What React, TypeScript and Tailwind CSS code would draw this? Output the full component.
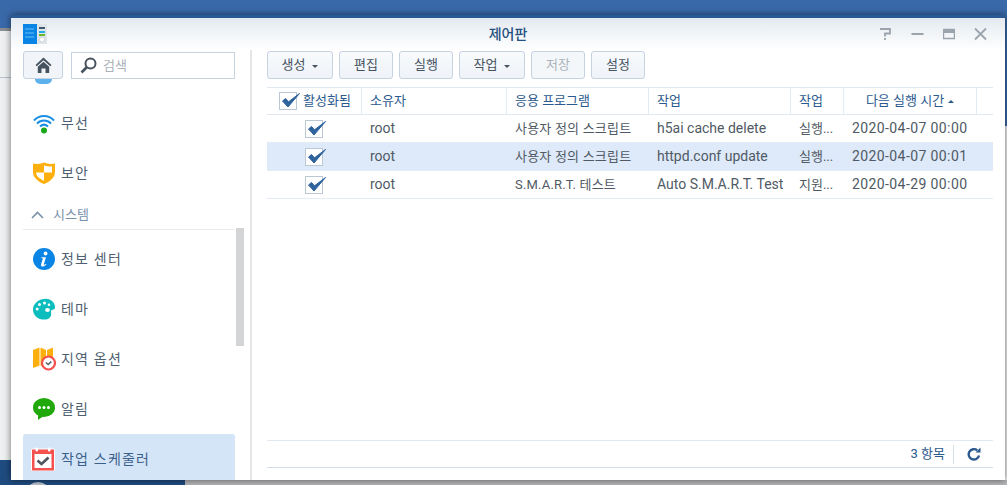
import React from "react";

const font = { fontFamily: '"Roboto", "Noto Sans CJK KR", sans-serif' };

// 사이드바 아이콘
const WifiIcon = () => (
  <svg width="22" height="22" viewBox="0 0 22 22" fill="none">
    <path d="M1 8.5C6.5 2.5 15.5 2.5 21 8.5" stroke="#1a8fe3" strokeWidth="2" />
    <path d="M4 11.5C8 7.5 14 7.5 18 11.5" stroke="#1a8fe3" strokeWidth="2" />
    <path d="M7 14.5C9.5 12.2 12.5 12.2 15 14.5" stroke="#1a8fe3" strokeWidth="2" />
    <circle cx="11" cy="18.5" r="3" fill="#19a81c" />
  </svg>
);

const ShieldIcon = () => (
  <svg width="22" height="22" viewBox="0 0 22 22">
    <path d="M11 0.5C14 2 18 2.2 22 1.5V10C22 16 16 20 11 22C6 20 0 16 0 10V1.5C4 2.2 8 2 11 0.5Z" fill="#fdb00d" />
    <path d="M11 3.5C13.5 4.5 16.5 4.8 19 4.4V10.5H11ZM11 10.5V18.8C7.5 17.2 3.2 14.4 3 10.5Z" fill="#fff" />
  </svg>
);

const InfoIcon = () => (
  <svg width="22" height="22" viewBox="0 0 22 22">
    <circle cx="11" cy="11" r="11" fill="#0a85e6" />
    <circle cx="12.6" cy="5.5" r="1.9" fill="#fff" />
    <path d="M8.5 9.2H13L10.8 16.2C10.6 17 11.4 17 13 15.8L13.3 16.4C11.5 18.2 10 18.8 8.8 18.4C7.8 18 7.9 17 8.2 16L9.9 10.6L8.3 10.1Z" fill="#fff" />
  </svg>
);

const PaletteIcon = () => (
  <svg width="22" height="22" viewBox="0 0 22 22">
    <path d="M11 1C17 0 22 4 22 9.5C22 11 21 11.5 19 12C17 12.6 18.8 15 18 17.5C17 21 13 22 9 21.5C3.5 20.5 0 16.5 0 11.5C0 6 5 1.500 11 1Z" fill="#0cbdbd" />
    <circle cx="11.5" cy="5" r="1.5" fill="#fff" />
    <circle cx="6.500" cy="6.500" r="1.500" fill="#fff" />
    <circle cx="4.200" cy="11" r="1.500" fill="#fff" />
    <circle cx="16" cy="6.800" r="1.300" fill="#fff" />
    <ellipse cx="14.500" cy="12" rx="2.400" ry="2.100" fill="#fff" />
  </svg>
);

const RegionIcon = () => (
  <svg width="23" height="24" viewBox="0 0 23 24">
    <path d="M0 3L6.500 0.500V18.500L0 21Z" fill="#fdb00d" />
    <path d="M7.500 0.500L13 3V21L7.500 18.500Z" fill="#fdb00d" />
    <path d="M14 3L20 0.500V12H14Z" fill="#fdb00d" />
    <circle cx="15.500" cy="16" r="6.500" fill="#fff" stroke="#f4514f" strokeWidth="2.200" />
    <path d="M12.800 15.500L15.200 17.500L18.300 14.600" fill="none" stroke="#56606a" strokeWidth="1.500" />
  </svg>
);

const ChatIcon = () => (
  <svg width="22" height="22" viewBox="0 0 22 22">
    <ellipse cx="11" cy="9.500" rx="11" ry="9.500" fill="#21a80b" />
    <path d="M5 15L5 22L12 17Z" fill="#21a80b" />
    <circle cx="6.500" cy="9.500" r="1.500" fill="#fff" />
    <circle cx="11" cy="9.500" r="1.500" fill="#fff" />
    <circle cx="15.500" cy="9.500" r="1.500" fill="#fff" />
  </svg>
);

const CalendarIcon = () => (
  <svg width="24" height="24" viewBox="0 0 24 24">
    <rect x="0.500" y="2" width="23" height="22" rx="1" fill="#f4514f" stroke="#fff" strokeWidth="1" />
    <rect x="3.500" y="7" width="17" height="14" fill="#fff" />
    <rect x="4.500" y="0.500" width="2.500" height="4" rx="1" fill="#fff" />
    <rect x="17" y="0.500" width="2.500" height="4" rx="1" fill="#fff" />
    <path d="M6.500 13.500L10.500 17L17.500 10.500" fill="none" stroke="#4e5560" strokeWidth="2.600" />
  </svg>
);

const Check = () => (
  <span className="relative block w-[18px] h-[18px] border border-[#bcc7d4] bg-white">
    <svg className="absolute left-[1px] -top-[3px]" width="20" height="20" viewBox="0 0 20 20">
      <path d="M1.500 11L7 17L18.500 3.500L7.500 11.800L4.500 8.500Z" fill="#2f639e" stroke="#2f639e" strokeWidth="1" />
    </svg>
  </span>
);

const Caret = () => (
  <span className="ml-[7px] mt-[2px] w-0 h-0 border-l-[3px] border-r-[3px] border-t-[3px] border-l-transparent border-r-transparent border-t-[#46525e]" />
);

const navItems = [
  { label: "정보 센터", icon: <InfoIcon /> },
  { label: "테마", icon: <PaletteIcon /> },
  { label: "지역 옵션", icon: <RegionIcon /> },
  { label: "알림", icon: <ChatIcon /> },
];

const NavRow = ({ label, icon }: { label: string; icon: React.ReactNode }) => (
  <div className="flex items-center h-[50px] pl-[9px] text-[14px] tracking-[1.2px] text-[#505f70]">
    <span className="w-[24px] h-[24px] flex items-center justify-center">{icon}</span>
    <span className="ml-[5px]">{label}</span>
  </div>
);

const buttons = [
  { label: "생성", w: "w-[66px]", caret: true },
  { label: "편집", w: "w-[54px]" },
  { label: "실행", w: "w-[54px]" },
  { label: "작업", w: "w-[66px]", caret: true },
  { label: "저장", w: "w-[54px]", disabled: true },
  { label: "설정", w: "w-[54px]" },
];

const rows = [
  { app: "사용자 정의 스크립트", task: "h5ai cache delete", action: "실행...", next: "2020-04-07 00:00" },
  { app: "사용자 정의 스크립트", task: "httpd.conf update", action: "실행...", next: "2020-04-07 00:01", selected: true },
  { app: "S.M.A.R.T. 테스트", task: "Auto S.M.A.R.T. Test", action: "지원...", next: "2020-04-29 00:00" },
];

export default function App() {
  return (
    <div className="relative w-[1007px] h-[485px] overflow-hidden bg-[#eef0f2] text-[13px]" style={font}>
      {/* 바탕화면 */}
      <div className="absolute left-0 top-0 w-full h-[28px] bg-[#3a69a9]" />
      <div className="absolute right-0 top-0 w-[2px] h-[126px] bg-[#3a69a9]" />
      <div className="absolute left-0 top-[28px] w-[11px] h-[3px] bg-[#8b8f94]" />
      <div className="absolute left-0 top-[77px] w-[11px] h-px bg-[#b9c2cc]" />
      <div className="absolute left-0 top-[460px] w-[185px] h-[25px] bg-[#1f4c80]" />
      <div className="absolute left-[185px] top-[480px] w-[822px] h-[5px] bg-[#b5b6b8]" />
      <div className="absolute left-[25px] top-[482px] w-[26px] h-[26px] rounded-full bg-[#b9c2cc]" />

      {/* 제어판 창 */}
      <div className="absolute left-[11px] top-[15px] w-[994px] h-[465px] flex flex-col bg-white border-t-[3px] border-[#2a5a94] shadow-[0_0_7px_rgba(0,0,0,0.55)]">
        <div className="relative h-[32px] shrink-0 flex items-center justify-center bg-gradient-to-b from-[#e4eaf0] to-white">
          <svg className="absolute left-[12px] top-[6px]" width="24" height="20" viewBox="0 0 24 20">
            <rect width="14" height="20" fill="#0a85e6" />
            <rect x="14" width="10" height="20" fill="#dfe4e8" />
            <path d="M2 5H11M2 9H11M2 13H11" stroke="#6cc0f5" strokeWidth="1" />
            <rect x="16" y="3" width="6" height="2" fill="#3d5a70" />
            <rect x="16" y="7" width="6" height="2" fill="#1fb0e8" />
            <rect x="16" y="10" width="6" height="2" fill="#6ab82c" />
            <circle cx="19" cy="15.500" r="2.500" fill="#fff" stroke="#a9b4bd" strokeWidth="0.500" />
          </svg>
          <span className="text-[14px] text-[#24507f] font-medium">제어판</span>
          <div className="absolute left-[867px] top-[9px] flex items-center text-[#9ba4ad]">
            <svg width="14" height="14" viewBox="0 0 14 14" fill="none" stroke="currentColor" strokeWidth="1.800">
              <path d="M2 2H12V6.500H7V9.500" />
              <path d="M7 11V13" />
            </svg>
            <svg className="ml-[19px]" width="13" height="14" viewBox="0 0 13 14" fill="none" stroke="currentColor" strokeWidth="2">
              <path d="M0.500 7H12.500" />
            </svg>
            <svg className="ml-[19px]" width="12" height="14" viewBox="0 0 12 14" fill="none" stroke="currentColor">
              <path d="M0.500 2.500H11.500V11.500H0.500Z" strokeWidth="1.400" />
              <path d="M0.500 4.500H11.500" strokeWidth="3" />
            </svg>
            <svg className="ml-[19px]" width="13" height="14" viewBox="0 0 13 14" fill="none" stroke="currentColor" strokeWidth="1.800">
              <path d="M1 1.500L12 12.500M12 1.500L1 12.500" />
            </svg>
          </div>
        </div>

        <div className="flex flex-1 min-h-0">
          {/* 사이드바 */}
          <aside className="relative w-[241px] shrink-0 border-r-2 border-[#e4e6e8]">
            <div className="relative z-10 flex gap-[8px] pl-[12px] pt-[1px] bg-white h-[29px]">
              <div className="w-[40px] h-[28px] flex items-center justify-center rounded-[3px] border border-[#c5d2e0] bg-[#f1f5f9]">
                <svg width="17" height="16" viewBox="0 0 17 16">
                  <path d="M8.500 0.500L0.500 8L1.800 9.300L8.500 3.200L15.200 9.300L16.500 8Z" fill="#46525e" />
                  <path d="M2.800 9.800L8.500 4.700L14.200 9.800V16H10.500V11.500H6.500V16H2.800Z" fill="#46525e" />
                </svg>
              </div>
              <div className="flex items-center w-[164px] h-[27px] mt-px border border-[#c5d2e0] pl-[8px] text-[13px] text-[#aab2ba]">
                <svg width="17" height="17" viewBox="0 0 17 17" fill="none">
                  <circle cx="10.500" cy="6.500" r="5" stroke="#46525e" strokeWidth="2" />
                  <path d="M7 10L1.500 15.500" stroke="#46525e" strokeWidth="2.600" />
                </svg>
                <span className="ml-[6px]">검색</span>
              </div>
            </div>

            <div className="relative h-[401px] overflow-hidden pl-[12px] w-[235px]">
              <div className="absolute left-[24px] top-0 w-[17px] h-[5px] rounded-b-full bg-[#5db2ee]" />
              <div className="w-[212px] pt-[19px]">
                <NavRow label="무선" icon={<WifiIcon />} />
                <NavRow label="보안" icon={<ShieldIcon />} />
                <div className="flex items-center h-[31px] mt-[1px] pt-[2px] pl-[8px] border-b border-[#e8eaec] text-[13px] text-[#7b92ab]">
                  <svg width="13" height="8" viewBox="0 0 13 8" fill="none" stroke="#7b92ab" strokeWidth="1.600">
                    <path d="M1 7L6.500 1.500L12 7" />
                  </svg>
                  <span className="ml-[9px]">시스템</span>
                </div>
                <div className="pt-[4px]">
                  {navItems.map((item) => (
                    <NavRow key={item.label} label={item.label} icon={item.icon} />
                  ))}
                </div>
                <div className="flex items-center h-[50px] pl-[8px] rounded-[3px] bg-[#d5e5f8] text-[14px] tracking-[1.2px] text-[#3a5f8a]">
                  <CalendarIcon />
                  <span className="ml-[6px]">작업 스케줄러</span>
                </div>
              </div>
              <div className="absolute left-[225px] top-[149px] w-[8px] h-[118px] bg-[#d3d4d6]" />
            </div>
          </aside>

          {/* 작업 스케줄러 목록 */}
          <main className="flex-1 min-w-0 flex flex-col pl-[15px] pr-[12px] pt-[1px]">
            <div className="flex gap-[6px] h-[28px] shrink-0">
              {buttons.map((b) => (
                <button
                  key={b.label}
                  className={`${b.w} h-[28px] flex items-center justify-center rounded-[3px] border border-[#c5d2e0] text-[13px] ${
                    b.disabled ? "bg-[#f4f7fa] text-[#a9b2bb]" : "bg-gradient-to-b from-[#f8fafc] to-[#eef3f8] text-[#46525e]"
                  }`}
                >
                  {b.label}
                  {b.caret && <Caret />}
                </button>
              ))}
            </div>

            <div className="mt-[8px] flex h-[28px] shrink-0 items-center border-y border-[#dfe7f0] text-[13px] text-[#2c5a8e]">
              <div className="w-[95px] h-full flex items-center border-r border-[#e3ebf4] pl-[12px] whitespace-nowrap">
                <Check />
                <span className="ml-[6px]">활성화됨</span>
              </div>
              <div className="w-[145px] h-full flex items-center border-r border-[#e3ebf4] pl-[8px]">소유자</div>
              <div className="w-[142px] h-full flex items-center border-r border-[#e3ebf4] pl-[8px]">응용 프로그램</div>
              <div className="w-[142px] h-full flex items-center border-r border-[#e3ebf4] pl-[8px]">작업</div>
              <div className="w-[53px] h-full flex items-center border-r border-[#e3ebf4] pl-[8px]">작업</div>
              <div className="w-[133px] h-full flex items-center justify-center border-r border-[#e3ebf4] whitespace-nowrap">
                다음 실행 시간
                <span className="ml-[4px] w-0 h-0 border-l-[3px] border-r-[3px] border-b-[3px] border-l-transparent border-r-transparent border-b-[#2c5a8e]" />
              </div>
            </div>

            {rows.map((row) => (
              <div
                key={row.task}
                className={`flex items-center h-[28px] shrink-0 border-b border-[#e3ebf4] text-[14px] text-[#505a64] ${
                  row.selected ? "bg-[#dee9f9]" : "bg-white"
                }`}
              >
                <div className="w-[95px] flex pl-[38px]">
                  <Check />
                </div>
                <div className="w-[145px] pl-[8px]">root</div>
                <div className="w-[142px] pl-[8px] text-[13px] tracking-[0.2px] whitespace-nowrap">{row.app}</div>
                <div className="w-[142px] pl-[8px] whitespace-nowrap">{row.task}</div>
                <div className="w-[53px] pl-[8px] text-[13px] whitespace-nowrap">{row.action}</div>
                <div className="w-[133px] pl-[8px] whitespace-nowrap tracking-[0.4px]">{row.next}</div>
              </div>
            ))}

            <div className="flex-1" />
            <div className="flex items-center justify-end h-[28px] mb-[12px] shrink-0 border-y border-[#e3e9f0] border-b-[#d5dfe9] text-[13px] text-[#2c5a8e]">
              <span>3 항목</span>
              <span className="w-px h-[19px] ml-[8px] bg-[#d5dfe9]" />
              <svg className="ml-[13px] mr-[12px]" width="14" height="14" viewBox="0 0 14 14" fill="none">
                <path d="M12 8.500A5.200 5.200 0 1 1 10.200 3.300" stroke="#2c5a8e" strokeWidth="2.400" />
                <path d="M8.500 5.500H13.500V0.500Z" fill="#2c5a8e" />
              </svg>
            </div>
          </main>
        </div>
      </div>
    </div>
  );
}
